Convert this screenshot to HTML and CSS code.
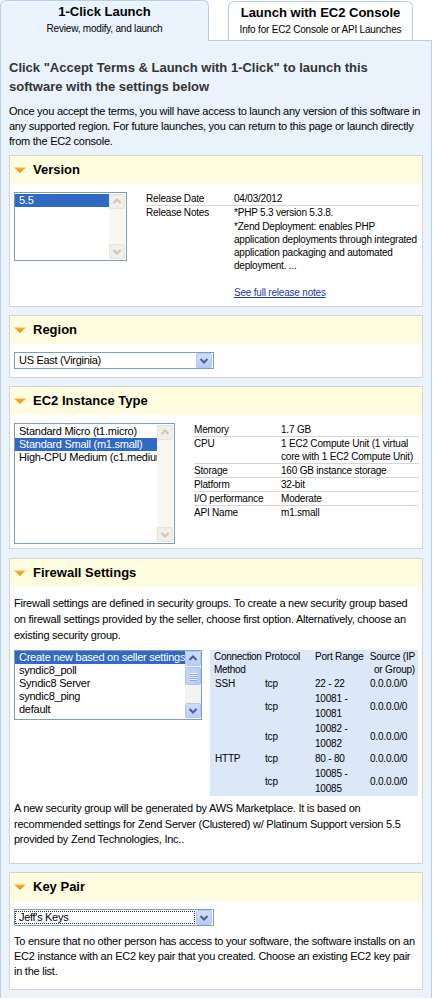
FILE: index.html
```html
<!DOCTYPE html>
<html>
<head>
<meta charset="utf-8">
<title>1-Click Launch</title>
<link rel="stylesheet" href="styles.css">
</head>
<body>
<div class="tabs">
  <div class="tab tab-active">
    <div class="tab-title">1-Click Launch</div>
    <div class="tab-sub">Review, modify, and launch</div>
  </div>
  <div class="tab tab-other">
    <div class="tab-title">Launch with EC2 Console</div>
    <div class="tab-sub">Info for EC2 Console or API Launches</div>
  </div>
</div>
<div class="panel">
  <h1 class="lead">Click "Accept Terms &amp; Launch with 1-Click" to launch this software with the settings below</h1>
  <p class="intro">Once you accept the terms, you will have access to launch any version of this software in any supported region. For future launches, you can return to this page or launch directly from the EC2 console.</p>

  <section class="box box-first">
    <div class="box-head">
      <svg class="arrow" width="12" height="6" viewBox="0 0 12 6"><defs><linearGradient id="ag1" x1="0" y1="0" x2="0" y2="1"><stop offset="0" stop-color="#fbb03b"/><stop offset="1" stop-color="#ec8a10"/></linearGradient></defs><polygon points="0,0.5 12,0.5 6,6" fill="url(#ag1)"/></svg>
      <h2>Version</h2>
    </div>
    <div class="box-body split split-version">
      <div class="listbox lb-version">
        <div class="lb-items">
          <div class="lb-item sel">5.5</div>
        </div>
        <div class="sb sb-off">
          <div class="sb-btn"><svg width="14" height="13" viewBox="0 0 14 13"><polyline points="3.5,8 7,4.5 10.5,8" fill="none" stroke="#c9c7ba" stroke-width="2"/></svg></div>
          <div class="sb-track"></div>
          <div class="sb-btn"><svg width="14" height="13" viewBox="0 0 14 13"><polyline points="3.5,5 7,8.5 10.5,5" fill="none" stroke="#c9c7ba" stroke-width="2"/></svg></div>
        </div>
      </div>
      <div class="details">
        <div class="drow"><div class="dl">Release Date</div><div class="dv">04/03/2012</div></div>
        <div class="drow"><div class="dl">Release Notes</div>
          <div class="dv">
            <p class="note">*PHP 5.3 version 5.3.8.</p>
            <p class="note note-gap">*Zend Deployment: enables PHP application deployments through integrated application packaging and automated deployment. ...</p>
            <p class="more"><a href="#" class="link">See full release notes</a></p>
          </div>
        </div>
      </div>
    </div>
  </section>

  <section class="box">
    <div class="box-head">
      <svg class="arrow" width="12" height="6" viewBox="0 0 12 6"><defs><linearGradient id="ag2" x1="0" y1="0" x2="0" y2="1"><stop offset="0" stop-color="#fbb03b"/><stop offset="1" stop-color="#ec8a10"/></linearGradient></defs><polygon points="0,0.5 12,0.5 6,6" fill="url(#ag2)"/></svg>
      <h2>Region</h2>
    </div>
    <div class="box-body body-region">
      <div class="select">
        <span class="select-text">US East (Virginia)</span>
        <span class="select-btn"><svg width="14" height="13" viewBox="0 0 14 13"><polyline points="3.5,5 7,8.5 10.5,5" fill="none" stroke="#4d6185" stroke-width="2"/></svg></span>
      </div>
    </div>
  </section>

  <section class="box">
    <div class="box-head">
      <svg class="arrow" width="12" height="6" viewBox="0 0 12 6"><defs><linearGradient id="ag3" x1="0" y1="0" x2="0" y2="1"><stop offset="0" stop-color="#fbb03b"/><stop offset="1" stop-color="#ec8a10"/></linearGradient></defs><polygon points="0,0.5 12,0.5 6,6" fill="url(#ag3)"/></svg>
      <h2>EC2 Instance Type</h2>
    </div>
    <div class="box-body split split-ec2">
      <div class="listbox lb-ec2">
        <div class="lb-items">
          <div class="lb-item">Standard Micro (t1.micro)</div>
          <div class="lb-item sel">Standard Small (m1.small)</div>
          <div class="lb-item">High-CPU Medium (c1.medium)</div>
        </div>
        <div class="sb sb-off">
          <div class="sb-btn"><svg width="14" height="13" viewBox="0 0 14 13"><polyline points="3.5,8 7,4.5 10.5,8" fill="none" stroke="#c9c7ba" stroke-width="2"/></svg></div>
          <div class="sb-track"></div>
          <div class="sb-btn"><svg width="14" height="13" viewBox="0 0 14 13"><polyline points="3.5,5 7,8.5 10.5,5" fill="none" stroke="#c9c7ba" stroke-width="2"/></svg></div>
        </div>
      </div>
      <div class="details details-ec2">
        <div class="drow"><div class="dl">Memory</div><div class="dv">1.7 GB</div></div>
        <div class="drow"><div class="dl">CPU</div><div class="dv">1 EC2 Compute Unit (1 virtual core with 1 EC2 Compute Unit)</div></div>
        <div class="drow"><div class="dl">Storage</div><div class="dv">160 GB instance storage</div></div>
        <div class="drow"><div class="dl">Platform</div><div class="dv">32-bit</div></div>
        <div class="drow"><div class="dl">I/O performance</div><div class="dv">Moderate</div></div>
        <div class="drow"><div class="dl">API Name</div><div class="dv">m1.small</div></div>
      </div>
    </div>
  </section>

  <section class="box box-fw">
    <div class="box-head">
      <svg class="arrow" width="12" height="6" viewBox="0 0 12 6"><defs><linearGradient id="ag4" x1="0" y1="0" x2="0" y2="1"><stop offset="0" stop-color="#fbb03b"/><stop offset="1" stop-color="#ec8a10"/></linearGradient></defs><polygon points="0,0.5 12,0.5 6,6" fill="url(#ag4)"/></svg>
      <h2>Firewall Settings</h2>
    </div>
    <div class="box-body body-fw">
      <p class="txt txt-fw">Firewall settings are defined in security groups. To create a new security group based on firewall settings provided by the seller, choose first option. Alternatively, choose an existing security group.</p>
      <div class="split split-fw">
        <div class="listbox lb-fw">
          <div class="lb-items">
            <div class="lb-item sel">Create new based on seller settings</div>
            <div class="lb-item">syndic8_poll</div>
            <div class="lb-item">Syndic8 Server</div>
            <div class="lb-item">syndic8_ping</div>
            <div class="lb-item">default</div>
          </div>
          <div class="sb sb-on">
            <div class="sb-btn"><svg width="14" height="13" viewBox="0 0 14 13"><polyline points="3.5,8 7,4.5 10.5,8" fill="none" stroke="#4d6185" stroke-width="2"/></svg></div>
            <div class="sb-track">
              <div class="sb-thumb"><span></span><span></span><span></span><span></span></div>
            </div>
            <div class="sb-btn"><svg width="14" height="13" viewBox="0 0 14 13"><polyline points="3.5,5 7,8.5 10.5,5" fill="none" stroke="#4d6185" stroke-width="2"/></svg></div>
          </div>
        </div>
        <table class="fw-table">
          <colgroup><col class="c1"><col class="c2"><col class="c3"><col class="c4"></colgroup>
          <thead>
            <tr><th class="th-conn">Connection Method</th><th>Protocol</th><th>Port Range</th><th class="th-src">Source (IP or Group)</th></tr>
          </thead>
          <tbody>
            <tr><td>SSH</td><td>tcp</td><td>22 - 22</td><td>0.0.0.0/0</td></tr>
            <tr><td></td><td>tcp</td><td>10081 - 10081</td><td>0.0.0.0/0</td></tr>
            <tr><td></td><td>tcp</td><td>10082 - 10082</td><td>0.0.0.0/0</td></tr>
            <tr><td>HTTP</td><td>tcp</td><td>80 - 80</td><td>0.0.0.0/0</td></tr>
            <tr><td></td><td>tcp</td><td>10085 - 10085</td><td>0.0.0.0/0</td></tr>
          </tbody>
        </table>
      </div>
      <p class="txt txt-fw2">A new security group will be generated by AWS Marketplace. It is based on recommended settings for Zend Server (Clustered) w/ Platinum Support version 5.5 provided by Zend Technologies, Inc..</p>
    </div>
  </section>

  <section class="box">
    <div class="box-head">
      <svg class="arrow" width="12" height="6" viewBox="0 0 12 6"><defs><linearGradient id="ag5" x1="0" y1="0" x2="0" y2="1"><stop offset="0" stop-color="#fbb03b"/><stop offset="1" stop-color="#ec8a10"/></linearGradient></defs><polygon points="0,0.5 12,0.5 6,6" fill="url(#ag5)"/></svg>
      <h2>Key Pair</h2>
    </div>
    <div class="box-body body-key">
      <div class="select">
        <span class="select-text select-focus">Jeff's Keys</span>
        <span class="select-btn"><svg width="14" height="13" viewBox="0 0 14 13"><polyline points="3.5,5 7,8.5 10.5,5" fill="none" stroke="#4d6185" stroke-width="2"/></svg></span>
      </div>
      <p class="txt txt-key">To ensure that no other person has access to your software, the software installs on an EC2 instance with an EC2 key pair that you created. Choose an existing EC2 key pair in the list.</p>
    </div>
  </section>
</div>
</body>
</html>
```

FILE: styles.css
```css
* { box-sizing: border-box; }

body {
  margin: 0;
  background: #fff;
  font-family: "Liberation Sans", Arial, sans-serif;
  color: #000;
}

/* Tabs */
.tabs {
  display: flex;
  align-items: flex-end;
  height: 40px;
}
.tab {
  border: 1px solid #b8cfe9;
  border-bottom: none;
  border-radius: 6px 6px 0 0;
  text-align: center;
  padding-top: 3px;
}
.tab-active {
  width: 209px;
  height: 41px;
  margin-bottom: -1px;
  background: #eaf2fc;
  position: relative;
  z-index: 1;
}
.tab-other {
  width: 185px;
  height: 39px;
  margin-left: 19px;
  background: #fff;
}
.tab-title {
  font-size: 13px;
  font-weight: bold;
  line-height: 16px;
}
.tab-sub {
  font-size: 10px;
  letter-spacing: -0.2px;
  line-height: 14px;
  margin-top: 2px;
}

/* Panel */
.panel {
  width: 432px;
  background: #eaf2fc;
  border: 1px solid #b8cfe9;
  border-bottom: none;
  padding: 17px 8px 8px;
}
.lead {
  margin: 0;
  font-size: 13px;
  font-weight: bold;
  color: #333;
  line-height: 19px;
}
.intro {
  margin: 8px 0 0;
  font-size: 11px;
  letter-spacing: -0.25px;
  line-height: 15px;
}

/* Section boxes */
.box {
  background: #fff;
  border: 1px solid #d3d3d3;
  margin-top: 8px;
}
.box-first { margin-top: 6px; }
.box-fw { margin-top: 9px; }
.box-head {
  height: 28px;
  background: #fefde0;
  display: flex;
  align-items: center;
  gap: 7px;
  padding-left: 4px;
}
.arrow { display: block; }
.box-head h2 {
  margin: 0;
  font-size: 13px;
  font-weight: bold;
  line-height: 16px;
}
.box-body {
  padding: 8px 3px 0 4px;
}

.split { display: grid; align-items: start; }
.split-version { grid-template-columns: 113px 1fr; column-gap: 19px; padding-bottom: 7px; }
.split-ec2 { grid-template-columns: 161px 1fr; column-gap: 19px; padding-bottom: 4px; }
.split-fw { grid-template-columns: 188px 1fr; column-gap: 8px; margin-top: 7px; padding: 0; }

/* Listboxes */
.listbox {
  border: 1px solid #7f9db9;
  background: #fff;
  display: flex;
  padding: 1px 1px 1px 0;
}
.lb-version { height: 69px; }
.lb-ec2 { height: 121px; }
.lb-fw { height: 70px; padding-top: 0; padding-right: 0; }
.lb-items {
  flex: 1;
  overflow: hidden;
  min-width: 0;
}
.lb-item {
  font-size: 11px;
  letter-spacing: -0.25px;
  line-height: 13px;
  height: 13px;
  padding-left: 4px;
  white-space: nowrap;
}
.lb-item.sel {
  background: #316ac5;
  color: #fff;
}

/* Scrollbars */
.sb {
  width: 16px;
  display: flex;
  flex-direction: column;
}
.sb-off { background: #f7f6f1; }
.sb-on { background: #f4f3ee; }
.sb-btn {
  height: 15px;
  border-radius: 2px;
  display: flex;
  align-items: center;
  justify-content: center;
}
.sb-off .sb-btn {
  background: #f0efe8;
  border: 1px solid #e5e3da;
}
.sb-on .sb-btn {
  background: linear-gradient(#cddcfd, #b8cdfb);
  border: 1px solid #b4c7f3;
}
.sb-track {
  flex: 1;
  padding-top: 1px;
}
.sb-thumb {
  height: 18px;
  border-radius: 2px;
  background: linear-gradient(90deg, #c4d4fc, #b5cafb);
  border: 1px solid #b0c4f1;
  display: flex;
  flex-direction: column;
  align-items: center;
  justify-content: center;
  gap: 1px;
}
.sb-thumb span {
  display: block;
  width: 7px;
  height: 1px;
  background: #eef3fe;
  box-shadow: 0 1px 0 #8fa9e0;
}

/* Detail tables */
.details {
  font-size: 10px;
  letter-spacing: -0.2px;
}
.drow {
  display: grid;
  grid-template-columns: 88px 1fr;
  line-height: 13px;
  border-bottom: 1px solid #d6d6d6;
}
.drow:last-child { border-bottom: none; }
.details-ec2 .drow { grid-template-columns: 87px 1fr; }
.note { margin: 0; }
.note-gap { margin-top: 1px; }
.more { margin: 14px 0 0; }
.link {
  color: #1b3ba8;
  text-decoration: underline;
}

/* Select */
.body-region { padding-bottom: 8px; }
.select {
  width: 200px;
  height: 17px;
  border: 1px solid #7f9db9;
  background: #fff;
  display: flex;
  align-items: center;
  padding: 0 1px 0 0;
}
.select-text {
  flex: 1;
  font-size: 11px;
  letter-spacing: -0.3px;
  line-height: 13px;
  padding-left: 4px;
  white-space: nowrap;
}
.select-focus {
  border: 1px dotted #333;
  margin-right: 1px;
  padding-left: 3px;
  line-height: 11px;
  height: 13px;
}
.select-btn {
  width: 16px;
  height: 15px;
  border-radius: 2px;
  background: linear-gradient(#d2dffd, #b6cbfb);
  border: 1px solid #b4c7f3;
  display: flex;
  align-items: center;
  justify-content: center;
}

/* Text blocks */
.txt {
  margin: 0;
  font-size: 11px;
  letter-spacing: -0.25px;
}
.txt-fw { line-height: 16px; }
.txt-fw2 { line-height: 15.5px; margin-top: 5px; }
.body-fw { padding-bottom: 15px; }
.body-key { padding-bottom: 10px; }
.txt-key { line-height: 15px; margin-top: 8px; }

/* Firewall table */
.fw-table {
  width: 208px;
  table-layout: fixed;
  border-collapse: collapse;
  background: #dce8f7;
  font-size: 10px;
  letter-spacing: -0.2px;
}
.fw-table .c1 { width: 50px; }
.fw-table .c2 { width: 50px; }
.fw-table .c3 { width: 55px; }
.fw-table .c4 { width: 53px; }
.fw-table th {
  font-weight: normal;
  text-align: left;
  vertical-align: top;
  line-height: 13px;
  padding: 0 0 0 5px;
  height: 26px;
}
.fw-table th.th-conn { padding-left: 4px; letter-spacing: -0.3px; }
.fw-table th.th-src {
  text-align: right;
  padding: 0 3px 0 0;
}
.fw-table td {
  line-height: 15px;
  padding: 0 0 0 5px;
  vertical-align: middle;
}
```
